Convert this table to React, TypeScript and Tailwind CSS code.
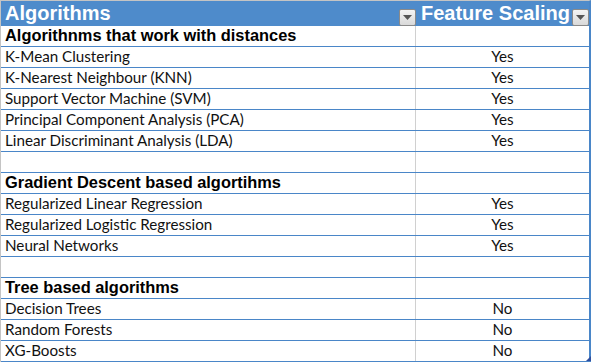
import React from "react";

type Row = { name: string; val?: string; kind: "section" | "item" | "blank" };

const rows: Row[] = [
  { name: "Algorithnms that work with distances", kind: "section" },
  { name: "K-Mean Clustering", val: "Yes", kind: "item" },
  { name: "K-Nearest Neighbour (KNN)", val: "Yes", kind: "item" },
  { name: "Support Vector Machine (SVM)", val: "Yes", kind: "item" },
  { name: "Principal Component Analysis (PCA)", val: "Yes", kind: "item" },
  { name: "Linear Discriminant Analysis (LDA)", val: "Yes", kind: "item" },
  { name: "", kind: "blank" },
  { name: "Gradient Descent based algortihms", kind: "section" },
  { name: "Regularized Linear Regression", val: "Yes", kind: "item" },
  { name: "Regularized Logistic Regression", val: "Yes", kind: "item" },
  { name: "Neural Networks", val: "Yes", kind: "item" },
  { name: "", kind: "blank" },
  { name: "Tree based algorithms", kind: "section" },
  { name: "Decision Trees", val: "No", kind: "item" },
  { name: "Random Forests", val: "No", kind: "item" },
  { name: "XG-Boosts", val: "No", kind: "item" },
];

function Dropdown() {
  return (
    <div className="w-[17px] h-[17px] flex items-center justify-center border border-[#8a8a8a] rounded-[2px] bg-gradient-to-b from-[#f4f4f4] to-[#d9d9d9]">
      <svg width="9" height="5" viewBox="0 0 9 5">
        <path d="M0 0 L9 0 L4.5 5 Z" fill="#555" />
      </svg>
    </div>
  );
}

export default function App() {
  return (
    <div className="w-[592px] h-[363px] bg-white relative overflow-hidden">
      <div className="w-[591px] border-t border-l border-[#c4c4c4] border-r-2 border-r-[#4a86c8]">
        <div className="flex h-[25px] bg-[#4e8bcb] text-white font-bold text-[20px] leading-none" style={{ fontFamily: '"Liberation Sans", Arial, sans-serif' }}>
          <div className="w-[415px] flex items-end justify-between pl-[4px]">
            <span className="pb-[3px]">Algorithms</span>
            <Dropdown />
          </div>
          <div className="flex-1 flex items-end justify-between pl-[5px]">
            <span className="pb-[3px]">Feature Scaling</span>
            <Dropdown />
          </div>
        </div>
        {rows.map((r, i) => (
          <div key={i} className="flex h-[21px] border-b border-[#4a86c8]">
            <div className="w-[415px] border-r border-[#d0d0d0] flex items-end pl-[4px] overflow-hidden whitespace-nowrap">
              {r.kind === "section" ? (
                <span className="font-bold text-[16.4px] leading-none pb-[3px] text-black" style={{ fontFamily: '"Liberation Sans", Arial, sans-serif' }}>
                  {r.name}
                </span>
              ) : (
                <span className="text-[15.2px] leading-none pb-[3px] text-[#111]" style={{ fontFamily: 'Lato, "Open Sans", sans-serif' }}>
                  {r.name}
                </span>
              )}
            </div>
            <div className="flex-1 flex items-end justify-center">
              {r.val && (
                <span className="text-[15.2px] leading-none pb-[3px] text-[#111]" style={{ fontFamily: 'Lato, "Open Sans", sans-serif' }}>
                  {r.val}
                </span>
              )}
            </div>
          </div>
        ))}
      </div>
      <div className="absolute left-[586px] top-[356px] w-0 h-0 border-l-[5px] border-l-transparent border-b-[5px] border-b-[#2f4f9f]" />
    </div>
  );
}
